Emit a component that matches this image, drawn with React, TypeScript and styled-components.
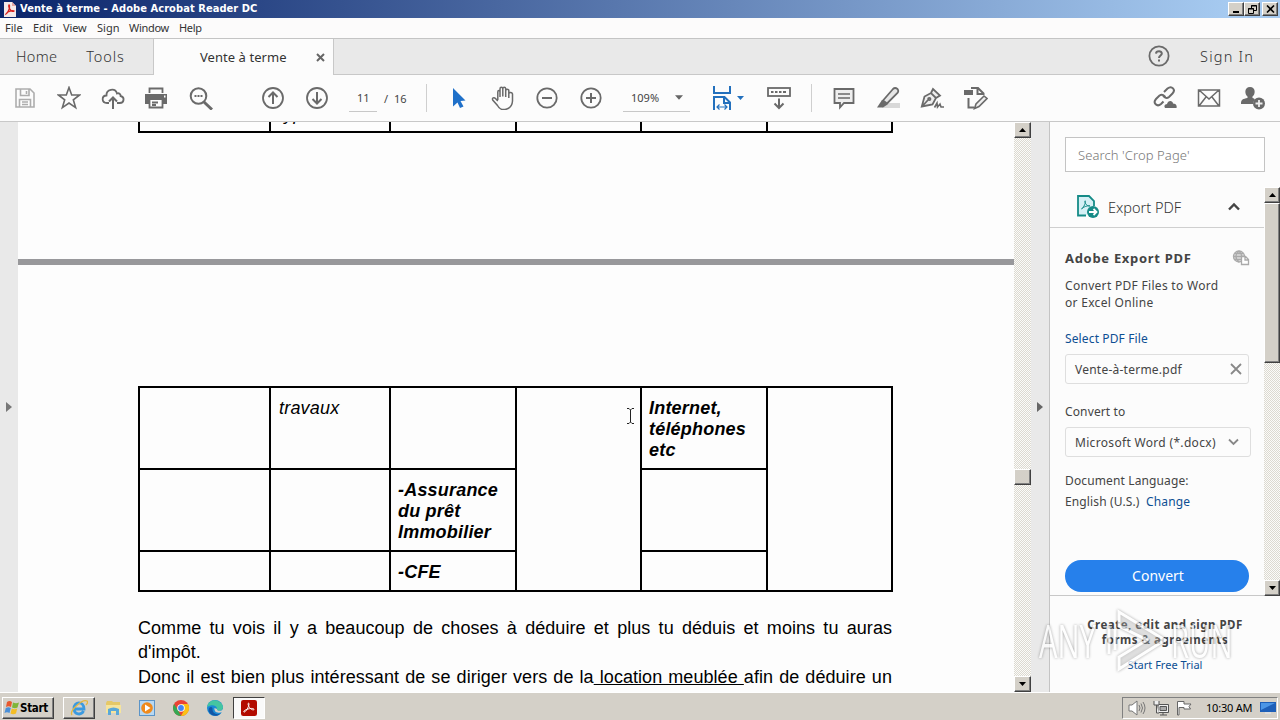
import React from 'react';
import styled, { createGlobalStyle, css } from 'styled-components';

const GlobalStyle = createGlobalStyle`
  * {
    box-sizing: border-box;
  }

  body {
    margin: 0;
    overflow: hidden;
    background: #fff;
    font-family: 'Noto Sans', 'Open Sans', sans-serif;
  }

  svg {
    display: block;
    flex: none;
  }
`;

const raised = css`
  background: #d4d0c8;
  border: 1px solid;
  border-color: #fff #404040 #404040 #fff;
  box-shadow: inset -1px -1px 0 #808080;
`;

const Screen = styled.div`
  position: relative;
  width: 1280px;
  height: 720px;
  display: flex;
  flex-direction: column;
  overflow: hidden;
  white-space: nowrap;
  color: #444;
`;

/* window frame */

const TitleBar = styled.header`
  height: 18px;
  padding: 0 2px 0 3px;
  display: flex;
  align-items: center;
  background: linear-gradient(90deg, #0a246a, #a6caf0 96%);
`;

const WindowTitle = styled.div`
  flex: 1;
  margin-left: 4px;
  color: #fff;
  font: bold 11px/18px 'DejaVu Sans Condensed', 'DejaVu Sans', sans-serif;
  font-stretch: condensed;
  letter-spacing: 0.07px;
`;

const WindowButton = styled.div<{ gap?: number }>`
  ${raised}
  width: 16px;
  height: 14px;
  margin-left: ${({ gap }) => gap || 0}px;
  display: flex;
  align-items: center;
  justify-content: center;
`;

const MenuBar = styled.nav`
  height: 20px;
  padding-left: 5px;
  display: flex;
  align-items: center;
  background: #fcfbfb;
`;

const MenuItem = styled.span<{ width: number; spacing?: number }>`
  width: ${({ width }) => width}px;
  font-size: 11px;
  line-height: 20px;
  color: #333;
  letter-spacing: ${({ spacing }) => spacing || 0}px;
`;

const TabBar = styled.div`
  height: 37px;
  display: flex;
  background: #e9e9e9;
  border-top: 1px solid #c4c4c4;
`;

const TabGroup = styled.div<{ grow?: boolean }>`
  flex: ${({ grow }) => (grow ? 1 : 'none')};
  width: ${({ grow }) => (grow ? 'auto' : '153px')};
  padding-left: ${({ grow }) => (grow ? 0 : 16)}px;
  padding-right: ${({ grow }) => (grow ? 26 : 0)}px;
  padding-bottom: 2px;
  display: flex;
  align-items: center;
  justify-content: ${({ grow }) => (grow ? 'flex-end' : 'flex-start')};
  gap: 29px;
  border-bottom: 1px solid #c8c8c8;
`;

const TabLabel = styled.span<{ spacing?: number }>`
  font-size: 14.5px;
  font-weight: 300;
  letter-spacing: ${({ spacing }) => spacing || 0}px;
  color: #333;
`;

const ActiveTab = styled.div`
  width: 181px;
  padding: 0 8px 0 46px;
  display: flex;
  align-items: center;
  justify-content: space-between;
  font-size: 13px;
  letter-spacing: 0.05px;
  color: #333;
  background: #fcfcfc;
  border-left: 1px solid #c8c8c8;
  border-right: 1px solid #c8c8c8;
`;

const Toolbar = styled.div`
  height: 47px;
  padding: 0 5px 0 3px;
  display: flex;
  align-items: center;
  background: #fcfcfc;
  border-bottom: 1px solid #c8c8c8;
`;

const Tool = styled.div<{ left?: number; width?: number }>`
  width: ${({ width }) => width || 44}px;
  margin-left: ${({ left }) => left || 0}px;
  display: flex;
  justify-content: center;
  flex: none;
`;

const Divider = styled.div<{ left: number }>`
  width: 1px;
  height: 28px;
  margin-left: ${({ left }) => left}px;
  background: #cfcfcf;
`;

const Field = styled.div<{ width: number; left: number }>`
  width: ${({ width }) => width}px;
  height: 27px;
  margin-left: ${({ left }) => left}px;
  padding: 0 7px 0 8px;
  display: flex;
  align-items: center;
  justify-content: space-between;
  font-size: 11px;
  color: #444;
  border-bottom: 1px solid #c8c8c8;
`;

const PageTotal = styled.span`
  width: 43px;
  padding-left: 7px;
  font-size: 11px;
  word-spacing: 3px;
  color: #444;
`;

const Spacer = styled.div`
  flex: 1;
`;

/* document */

const Workspace = styled.main`
  height: 570px;
  display: flex;
`;

const Gutter = styled.div`
  width: 18px;
  display: flex;
  align-items: center;
  justify-content: center;
  background: #e9e9e9;
`;

const Pages = styled.div`
  width: 996px;
  display: flex;
  flex-direction: column;
  overflow: hidden;
  background: #fdfdfd;
  color: #000;
  font-family: 'Liberation Sans', Arial, sans-serif;
  font-size: 18px;
`;

const PageBreak = styled.div`
  height: 6px;
  flex: none;
  margin: 126px 0 121px;
  background: #98989b;
`;

const Table = styled.div<{ tail?: boolean }>`
  width: 755px;
  flex: none;
  margin-left: 120px;
  padding: ${({ tail }) => (tail ? '0 2px 2px' : '2px')};
  display: grid;
  grid-template-columns: 129px 118px 124px 123px 124px 123px;
  grid-template-rows: ${({ tail }) => (tail ? '9px' : '80px 80px 38px')};
  gap: 2px;
  background: #000;
`;

const Cell = styled.div<{ rows?: number; bold?: boolean }>`
  grid-row: span ${({ rows }) => rows || 1};
  padding: 10px 0 0 ${({ bold }) => (bold ? 7 : 8)}px;
  overflow: hidden;
  background: #fdfdfd;
  font-style: italic;
  font-weight: ${({ bold }) => (bold ? 'bold' : 'normal')};
  line-height: 21px;
  letter-spacing: 0.2px;
`;

const TailCell = styled(Cell)`
  height: 9px;
  padding: 0 0 6px 8px;
  display: flex;
  align-items: flex-end;
`;

const Paragraph = styled.div`
  width: 754px;
  margin: 24px 0 0 120px;
  letter-spacing: 0.05px;
`;

const Line = styled.div<{ justified?: boolean }>`
  height: 24.4px;
  line-height: 24.4px;
  text-align-last: ${({ justified }) => (justified ? 'justify' : 'left')};
`;

/* scrollbars */

const ScrollTrack = styled.div<{ width: number }>`
  width: ${({ width }) => width}px;
  flex: none;
  display: flex;
  flex-direction: column;
  background: repeating-conic-gradient(#dcd9d0 0 25%, #fbfbf9 0 50%) 0 0 / 2px 2px;
`;

const ScrollButton = styled.div`
  ${raised}
  height: 16px;
  display: flex;
  align-items: center;
  justify-content: center;
`;

const ScrollThumb = styled.div<{ top: number; height: number }>`
  ${raised}
  height: ${({ height }) => height}px;
  margin-top: ${({ top }) => top}px;
`;

/* tools pane */

const ToolsPane = styled.aside`
  width: 231px;
  display: flex;
  flex-direction: column;
  background: #fcfcfc;
  border-left: 1px solid #c4c4c4;
`;

const SearchBox = styled.div`
  width: 200px;
  height: 35px;
  margin: 15px 0 15px 15px;
  padding-left: 12px;
  border: 1px solid #c4c4c4;
  background: #fff;
  color: #777;
  font-size: 13px;
  font-weight: 300;
  line-height: 34px;
  letter-spacing: 0.1px;
`;

const PaneScroller = styled.div`
  height: 409px;
  display: flex;
`;

const PaneBody = styled.div`
  flex: 1;
  border-bottom: 1px solid #c8c8c8;
`;

const SectionHeader = styled.div`
  height: 41px;
  padding: 0 22px 0 26px;
  display: flex;
  align-items: center;
  border-bottom: 1px solid #cfcfcf;
`;

const SectionTitle = styled.span`
  flex: 1;
  margin-left: 8px;
  font-size: 14.5px;
  font-weight: 300;
  color: #333;
`;

const Form = styled.div`
  width: 201px;
  padding: 20px 0 0 15px;
  font-size: 12px;
  letter-spacing: 0.13px;
`;

const FormTitle = styled.div`
  height: 20px;
  padding-right: 1px;
  display: flex;
  align-items: center;
  justify-content: space-between;
  font-size: 13px;
  font-weight: bold;
  letter-spacing: 0.7px;
`;

const Hint = styled.div`
  margin-top: 9px;
  line-height: 17px;
  letter-spacing: 0.3px;
`;

const TextLink = styled.span`
  color: #0d4f93;
`;

const Label = styled.div<{ top: number }>`
  height: 20px;
  margin-top: ${({ top }) => top}px;
  line-height: 20px;
`;

const Input = styled.div<{ wide?: boolean }>`
  width: ${({ wide }) => (wide ? 186 : 184)}px;
  height: 30px;
  margin-top: 5px;
  padding: 0 ${({ wide }) => (wide ? 11 : 6)}px 0 9px;
  display: flex;
  align-items: center;
  justify-content: space-between;
  letter-spacing: ${({ wide }) => (wide ? 0.32 : 0.24)}px;
  border: 1px solid #dedede;
  border-radius: 3px;
`;

const ConvertButton = styled.div`
  width: 184px;
  height: 32px;
  margin-top: 48px;
  padding-left: 2px;
  border-radius: 16px;
  background: #2680eb;
  color: #fff;
  font-size: 14px;
  line-height: 31px;
  letter-spacing: 0;
  text-align: center;
`;

const Promo = styled.div`
  width: 200px;
  margin: 21px 0 0 15px;
  font-size: 11.5px;
  font-weight: bold;
  line-height: 15px;
  text-align: center;
  letter-spacing: 0.5px;
`;

const Trial = styled.div`
  margin-top: 10px;
  color: #0d4f93;
  font-size: 11px;
  font-weight: normal;
  letter-spacing: 0;
`;

/* watermark lies over the pane */

const Watermark = styled.div`
  position: absolute;
  left: 1039px;
  top: 606px;
  width: 196px;
  height: 70px;
  display: flex;
  align-items: center;
  justify-content: space-between;
  opacity: 0.75;
  filter: drop-shadow(0 0 1.5px rgba(0, 0, 0, 0.45));
`;

const WatermarkText = styled.span<{ width: number }>`
  width: ${({ width }) => width}px;
  color: #fff;
  font: 45px/72px 'Open Sans', sans-serif;
  transform: scaleX(0.65);
  transform-origin: left;
`;

/* taskbar */

const TaskBar = styled.footer`
  height: 28px;
  padding: 3px 2px 1px;
  display: flex;
  align-items: center;
  background: #d4d0c8;
  border-top: 1px solid #fff;
`;

const StartButton = styled.div`
  ${raised}
  width: 52px;
  height: 22px;
  margin-right: 9px;
  padding-left: 1px;
  display: flex;
  align-items: center;
  color: #000;
  font: bold 11.5px 'DejaVu Sans Condensed', sans-serif;
  font-stretch: condensed;
  letter-spacing: -0.3px;
`;

const TaskButton = styled.div<{ mode?: 'raised' | 'pressed' }>`
  width: ${({ mode }) => (mode ? 32 : 34)}px;
  height: 22px;
  margin-right: ${({ mode }) => (mode ? 1 : 0)}px;
  display: flex;
  align-items: center;
  justify-content: center;
  ${({ mode }) => mode === 'raised' && raised}
  ${({ mode }) =>
    mode === 'pressed' &&
    css`
      margin-left: 1px;
      background: #fafafa;
      border: 1px solid;
      border-color: #404040 #fff #fff #404040;
    `}
`;

const Tray = styled.div`
  width: 156px;
  height: 22px;
  padding: 0 1px 0 5px;
  display: flex;
  align-items: center;
  gap: 7px;
  border: 1px solid;
  border-color: #808080 #fff #fff #808080;
`;

const Clock = styled.span`
  width: 47px;
  margin-left: 6px;
  font-size: 11px;
  letter-spacing: -0.2px;
  color: #000;
`;

const TextCursor = styled.svg`
  position: absolute;
  left: 626px;
  top: 407px;
`;

const Icon = ({ size = 24, children }: { size?: number; children: React.ReactNode }) => (
  <svg width={size} height={size} viewBox="0 0 24 24" fill="none" stroke="#6a6a6a" strokeWidth="1.8">
    {children}
  </svg>
);

const Arrow = ({ dir = 'up', color = '#000', w = 7 }: { dir?: 'up' | 'down' | 'right'; color?: string; w?: number }) => (
  <svg width={w} height={dir === 'right' ? 10 : w > 7 ? 5 : 4} viewBox={dir === 'right' ? '0 0 6 10' : '0 0 7 4'} fill={color}>
    <path d={{ up: 'M0 4L3.5 0L7 4Z', down: 'M0 0H7L3.5 4Z', right: 'M0 0L6 5L0 10Z' }[dir]} />
  </svg>
);

const AcrobatMark = ({ size }: { size: number }) => (
  <svg width={size} height={size} viewBox="0 0 18 18" fill="none">
    <rect width="18" height="18" rx="2.5" fill="#b30b00" />
    <path
      d="M3.5 13.6c2-.1 5.3-5.8 5.5-9.1.1-1.5-1.3-1.2-1 .3.5 3.2 3.6 6.5 6 6.3 1.6-.2.4-1.7-2.1-1.6-3.3.1-7.1 1.4-8.3 2.7-.6.8-.6 1.4-.1 1.4Z"
      stroke="#fff"
      strokeWidth="1.1"
    />
  </svg>
);

const App = () => (
  <Screen>
    <GlobalStyle />
    <TitleBar>
      <svg width="13" height="15" viewBox="0 0 13 15">
        <path d="M1 0H9L13 4V15H1Z" fill="#f4e9e9" />
        <path d="M9 0V4H13" fill="#e4a5a2" />
        <path d="M3 12C5 11 7 6 6.5 3.5C6 2 5 4 6.5 6.5C8 9 10 10 11 9C10 8 4 9.5 3 12Z" fill="none" stroke="#d8211d" strokeWidth="1.3" />
      </svg>
      <WindowTitle>Vente à terme - Adobe Acrobat Reader DC</WindowTitle>
      <WindowButton>
        <svg width="8" height="8"><path d="M1 6H7V8H1Z" /></svg>
      </WindowButton>
      <WindowButton>
        <svg width="9" height="9" fill="none" stroke="#000">
          <path d="M3.5 3V.5H8.5V5.5H6M3 1H9M.5 3.5H5.5V8.5H.5ZM0 4H6" />
        </svg>
      </WindowButton>
      <WindowButton gap={2}>
        <svg width="9" height="8" stroke="#000" strokeWidth="1.6"><path d="M1 .5L8 7.5M8 .5L1 7.5" /></svg>
      </WindowButton>
    </TitleBar>
    <MenuBar>
      <MenuItem width={28}>File</MenuItem>
      <MenuItem width={30}>Edit</MenuItem>
      <MenuItem width={34} spacing={-0.1}>View</MenuItem>
      <MenuItem width={32}>Sign</MenuItem>
      <MenuItem width={50} spacing={-0.3}>Window</MenuItem>
      <MenuItem width={30} spacing={-0.3}>Help</MenuItem>
    </MenuBar>
    <TabBar>
      <TabGroup>
        <TabLabel spacing={0.3}>Home</TabLabel>
        <TabLabel spacing={0.9}>Tools</TabLabel>
      </TabGroup>
      <ActiveTab>
        <span>Vente à terme</span>
        <svg width="9" height="9" stroke="#666" strokeWidth="2"><path d="M1 1L8 8M8 1L1 8" /></svg>
      </ActiveTab>
      <TabGroup grow>
        <Icon>
          <circle cx="12" cy="12" r="9.6" />
          <path d="M9 9.6C9.2 6.5 15 6.5 14.8 9.6C14.7 11.4 12 11.6 12 14M12 15.6V17.6" strokeWidth="2" />
        </Icon>
        <TabLabel spacing={1.2}>Sign In</TabLabel>
      </TabGroup>
    </TabBar>
    <Toolbar>
      <Tool>
        <svg width="20" height="20" viewBox="0 0 20 20" fill="none" stroke="#adadad" strokeWidth="1.6">
          <path d="M1 1H15L19 5V19H1ZM5.5 1V7.5H14V1M4.5 19V11.5H15.5V19M7 14H13M7 16.5H13M11.5 3V6" />
        </svg>
      </Tool>
      <Tool>
        <Icon>
          <path d="M12 1.5L14.7 9H22.6L16.3 13.8L18.6 21.6L12 17L5.4 21.6L7.7 13.8L1.4 9H9.3Z" strokeWidth="1.6" />
        </Icon>
      </Tool>
      <Tool>
        <Icon>
          <path d="M8 17H6C.3 17 .3 9.7 5.5 9.5C5 3 14.2 1.5 16 7.5C18 6.7 19.7 8 19.6 10C24 11 23.3 17 18.8 17H16" />
          <path d="M12 23V12M8 15.5L12 11.5L16 15.5" strokeWidth="2" />
        </Icon>
      </Tool>
      <Tool left={-1}>
        <Icon>
          <path d="M1 8H23V18H19V14H5V18H1Z" fill="#6a6a6a" stroke="none" />
          <path d="M5.5 7V2.5H18.5V7M5.5 14V21.5H18.5V14M8 16.5H14M8 19H12" />
          <path d="M20 10.5H21.5" stroke="#fff" />
        </Icon>
      </Tool>
      <Tool left={1}>
        <Icon>
          <circle cx="9.5" cy="10" r="7.8" strokeWidth="2" />
          <path d="M15 16L23 23.5" strokeWidth="3" />
          <path d="M5.5 10H7.5M8.5 10H10.5M11.5 10H13.5" />
        </Icon>
      </Tool>
      <Tool left={28}>
        <Icon>
          <circle cx="12" cy="12" r="10" />
          <path d="M12 18V6.5M7.5 11L12 6.5L16.5 11" strokeWidth="2" />
        </Icon>
      </Tool>
      <Tool>
        <Icon>
          <circle cx="12" cy="12" r="10" />
          <path d="M12 6V17.5M7.5 13L12 17.5L16.5 13" strokeWidth="2" />
        </Icon>
      </Tool>
      <Field width={28} left={10}>11</Field>
      <PageTotal>/ 16</PageTotal>
      <Divider left={6} />
      <Tool left={10}>
        <svg width="14" height="20" viewBox="0 0 14 20" fill="#1f70c9"><path d="M1 0L13.5 12.5L8.5 13L11.5 18.5L8 20L5.5 14.5L1 18.5Z" /></svg>
      </Tool>
      <Tool>
        <Icon>
          <path d="M6.8 14V6C6.8 4 9 4 9 6V11M9 10.5V3C9 .8 11.8.8 11.8 3V10.5M11.8 10V2.7C12 .8 14.5.8 14.7 2.7V11M14.7 10.5V4.5C15 2.8 17.5 2.8 17.8 4.5V12M17.8 9V7.5C18.5 6 21 6.2 21.5 8V15C21 24 10 26.5 6.5 19.5L1.7 14C.7 12 3 11 4.5 12.5L6.8 15" strokeWidth="1.5" />
        </Icon>
      </Tool>
      <Tool>
        <Icon><circle cx="12" cy="12" r="9.7" /><path d="M7 12H17" strokeWidth="2" /></Icon>
      </Tool>
      <Tool>
        <Icon><circle cx="12" cy="12" r="9.7" /><path d="M7 12H17M12 7V17" strokeWidth="2" /></Icon>
      </Tool>
      <Field width={67} left={10}>
        109% <Arrow dir="down" color="#666" w={8} />
      </Field>
      <Tool left={20} width={24}>
        <svg width="18" height="26" viewBox="0 0 18 26" fill="none" stroke="#2370bd" strokeWidth="2">
          <path d="M1 1V8H17V1M1 25V12H11.5L17 17.5V25M11 12V18H17" />
          <path d="M4 22H14M6.5 19.5L4 22L6.5 24.5M11.5 19.5L14 22L11.5 24.5" strokeWidth="1.2" />
        </svg>
      </Tool>
      <Tool left={1} width={10}><Arrow dir="down" color="#2370bd" /></Tool>
      <Tool left={12}>
        <Icon>
          <rect x="1" y="2" width="22" height="8" />
          <path d="M4 6H6.5M8 6H10.5M12 6H14.5M16 6H19" />
          <path d="M12 12.5V22M7.5 17.5L12 22L16.5 17.5" strokeWidth="2" />
        </Icon>
      </Tool>
      <Divider left={10} />
      <Tool left={10}>
        <Icon>
          <path d="M2.5 3H21.5V17H12L8 21.5V17H2.5Z" fill="#eee" />
          <path d="M6 8H18M6 12H18" strokeWidth="1.4" />
        </Icon>
      </Tool>
      <Tool>
        <Icon>
          <path d="M10 17H24V22H6Z" fill="#d8d8d8" stroke="none" />
          <path d="M7 14.5L17 3Q19 1 21.5 3Q23 5 21.5 7L11 17.5Z" fill="#e6e6e6" />
          <path d="M6 14L11.5 18.5L7 21.5H1Z" fill="#6a6a6a" stroke="none" />
        </Icon>
      </Tool>
      <Tool>
        <Icon>
          <path d="M1.8 20.5L4.5 10.5L11 7L16 12L12.5 18.5ZM2 20.5L8 14M11 7L13 3L20 9.5L16 12" fill="#eee" />
          <path d="M13 1.5L21 9" stroke="#fcfcfc" strokeWidth="0" />
          <circle cx="9.3" cy="13" r="1.2" />
          <path d="M14.5 21.5L17 17L17.5 21L20 18L21 21H24" strokeWidth="1.6" />
        </Icon>
      </Tool>
      <Tool>
        <Icon>
          <path d="M0 4H9V9H0Z" fill="#6a6a6a" stroke="none" />
          <path d="M7 2H14L19.5 7.5V9M13.5 2V8H19M4.5 12V21.5H10" strokeWidth="2" />
          <path d="M10.5 22.5L12 18L20 10L23 12.5L15 20.5Z" fill="#eee" strokeWidth="1.6" />
        </Icon>
      </Tool>
      <Spacer />
      <Tool>
        <Icon>
          <path d="M11 6L14.5 2.5C19-1 23 4 19.5 7.5L16 11C13.5 13 10.5 11.5 10 9M10.5 15.5L8 18C4 21.5-.5 17 3 13L6.5 9.5C9 8 12 9 12.5 12" strokeWidth="2" />
          <path d="M12 22C10 18.5 14 18 14 18C15 13.5 20 14.5 20 17.5C24 17.5 24 21 23.5 22Z" fill="#6a6a6a" stroke="none" />
        </Icon>
      </Tool>
      <Tool>
        <Icon>
          <path d="M1.5 4H22.5V20H1.5ZM2 4L12 13L22 4M2 20L9 11M22 20L15 11" strokeWidth="1.5" />
        </Icon>
      </Tool>
      <Tool>
        <Icon>
          <path d="M9 1C15 1 14.5 8.5 11.5 10.5V12C14 12.5 14 13 12.5 16Q12 18 12 18H0C0 13 2 13 6.5 12V10.5C3.5 8.5 3 1 9 1Z" fill="#6a6a6a" stroke="none" />
          <circle cx="18" cy="17.5" r="6" fill="#6a6a6a" stroke="none" />
          <path d="M14.5 17.5H21.5M18 14V21" stroke="#eee" />
        </Icon>
      </Tool>
    </Toolbar>

    <Workspace>
      <Gutter><Arrow dir="right" color="#777" w={6} /></Gutter>
      <Pages>
        <Table tail>
          <TailCell />
          <TailCell>type</TailCell>
          <TailCell /><TailCell /><TailCell /><TailCell />
        </Table>
        <PageBreak />
        <Table>
          <Cell />
          <Cell>travaux</Cell>
          <Cell />
          <Cell rows={3} />
          <Cell bold>Internet,<br />téléphones<br />etc</Cell>
          <Cell rows={3} />
          <Cell />
          <Cell />
          <Cell bold>-Assurance<br />du prêt<br />Immobilier</Cell>
          <Cell />
          <Cell />
          <Cell />
          <Cell bold>-CFE</Cell>
          <Cell />
        </Table>
        <Paragraph>
          <Line justified>Comme tu vois il y a beaucoup de choses à déduire et plus tu déduis et moins tu auras</Line>
          <Line>d'impôt.</Line>
          <Line justified>
            Donc il est bien plus intéressant de se diriger vers de la<u> location meublée </u>afin de déduire un
          </Line>
        </Paragraph>
      </Pages>
      <ScrollTrack width={17}>
        <ScrollButton><Arrow /></ScrollButton>
        <ScrollThumb top={331} height={16} />
        <Spacer />
        <ScrollButton><Arrow dir="down" /></ScrollButton>
      </ScrollTrack>
      <Gutter><Arrow dir="right" color="#666" w={6} /></Gutter>
      <ToolsPane>
        <SearchBox>Search 'Crop Page'</SearchBox>
        <PaneScroller>
          <PaneBody>
            <SectionHeader>
              <svg width="24" height="24" viewBox="0 0 24 24" fill="none" stroke="#158b87" strokeWidth="1.8">
                <path d="M10 20.5H2V1H13L18 6V11" fill="#d5f0f5" />
                <path d="M5.5 14C8 12.5 10 7 9.2 5.8C8 6 10 11.5 14 11C12.5 10 7 12 5.5 14Z" strokeWidth="1" />
                <circle cx="17" cy="17" r="6" fill="#158b87" stroke="none" />
                <path d="M13 17H20M17.5 14L20.5 17L17.5 20" stroke="#fff" />
              </svg>
              <SectionTitle>Export PDF</SectionTitle>
              <svg width="16" height="10" fill="none" stroke="#444" strokeWidth="2.4"><path d="M3 7.5L8 2.5L13 7.5" /></svg>
            </SectionHeader>
            <Form>
              <FormTitle>
                Adobe Export PDF
                <svg width="18" height="16" viewBox="0 0 18 16" fill="none" stroke="#aaa" strokeWidth="1.3">
                  <circle cx="7" cy="6.5" r="5.5" fill="#ddd" />
                  <path d="M1.5 6.5H12M3 3.5H11M3 9.5H9M7 1C3 4 3 9 7 12M7 1C9 3 10 5 9.5 7" />
                  <path d="M9.5 6.5H13.5L16.5 9.5V14.5H9.5ZM13 7V10H16" fill="#fff" />
                </svg>
              </FormTitle>
              <Hint>Convert PDF Files to Word<br />or Excel Online</Hint>
              <Label top={18}><TextLink>Select PDF File</TextLink></Label>
              <Input>
                Vente-à-terme.pdf
                <svg width="12" height="12" stroke="#888" strokeWidth="1.8"><path d="M1 1L11 11M11 1L1 11" /></svg>
              </Input>
              <Label top={18}>Convert to</Label>
              <Input wide>
                Microsoft Word (*.docx)
                <svg width="11" height="8" fill="none" stroke="#888" strokeWidth="1.8"><path d="M1 1.5L5.5 6L10 1.5" /></svg>
              </Input>
              <Label top={14}>Document Language:</Label>
              <Label top={1}>English (U.S.) &nbsp;<TextLink>Change</TextLink></Label>
              <ConvertButton>Convert</ConvertButton>
            </Form>
          </PaneBody>
          <ScrollTrack width={16}>
            <ScrollButton><Arrow /></ScrollButton>
            <ScrollThumb top={0} height={160} />
            <Spacer />
            <ScrollButton><Arrow dir="down" /></ScrollButton>
          </ScrollTrack>
        </PaneScroller>
        <Promo>
          Create, edit and sign PDF<br />forms &amp; agreements
          <Trial>Start Free Trial</Trial>
        </Promo>
      </ToolsPane>
    </Workspace>

    <TaskBar>
      <StartButton>
        <svg width="16" height="16" viewBox="0 0 16 16">
          <path d="M3 2Q5.5 0 8 2L7 7Q4.5 5.5 2 7Z" fill="#e8582e" />
          <path d="M9 2.5Q12 4 15 2.5L13.5 7.5Q11 9 8 7.5Z" fill="#7fb539" />
          <path d="M1.8 8Q4.5 6.5 6.8 8L5.5 13Q3 11.5.5 13Z" fill="#4a8fd8" />
          <path d="M7.8 8.5Q10.5 10 13.2 8.5L12 13.5Q9 15 6.5 13.5Z" fill="#f4bd25" />
        </svg>
        Start
      </StartButton>
      <TaskButton mode="raised">
        <svg width="18" height="18" viewBox="0 0 18 18" fill="none">
          <path d="M4 10H14C14 2 4 2 4 9.5C4 16 11.5 16.5 13.5 12" stroke="#3b9ae0" strokeWidth="2.8" />
          <path d="M2 16C-1 12 12 0 17 2C18 3 17 5 16 6" stroke="#e4b73f" strokeWidth="1.3" />
        </svg>
      </TaskButton>
      <TaskButton>
        <svg width="17" height="16" viewBox="0 0 17 16">
          <path d="M1 3L2 1H7L8 2H15V6H1Z" fill="#e5c867" />
          <path d="M1 5H16V13H1Z" fill="#f6e49c" />
          <path d="M3 9Q8.5 6 14 9V15H11V11H6V15H3Z" fill="#5aa8d8" />
        </svg>
      </TaskButton>
      <TaskButton>
        <svg width="16" height="16" viewBox="0 0 16 16">
          <rect x=".5" y=".5" width="15" height="15" fill="#b8d8f2" stroke="#5b94c8" />
          <circle cx="8" cy="8" r="5.8" fill="#f08a1c" />
          <path d="M6 4.5L11.5 8L6 11.5Z" fill="#fff" />
        </svg>
      </TaskButton>
      <TaskButton>
        <svg width="16" height="16" viewBox="0 0 16 16">
          <circle cx="8" cy="8" r="8" fill="#ea4335" />
          <path d="M1.1 4L4.9 10L8 16A8 8 0 0 1 1.1 4Z" fill="#34a853" />
          <path d="M15 4A8 8 0 0 1 8 16L11.2 10L8 4Z" fill="#fbc116" />
          <circle cx="8" cy="8" r="3.8" fill="#fff" />
          <circle cx="8" cy="8" r="2.9" fill="#4285f4" />
        </svg>
      </TaskButton>
      <TaskButton>
        <svg width="16" height="16" viewBox="0 0 16 16">
          <circle cx="8" cy="8" r="8" fill="#1a8ad6" />
          <path d="M.2 7C1 1 7-1 11.5 1.2C15 3 16.5 6 15.8 8.5C14.8 11.5 9 11 9.8 9C10.8 6 5 3.5.2 7Z" fill="#45c5a1" />
          <path d="M5.5 8C5 13 9 15.5 13.5 13.6C10 17.5 4 16 2 12C.5 8 4 5.5 5.5 8Z" fill="#1256a5" />
          <path d="M10 9C9.2 11 14.5 11.8 16 9V12L13.5 12.5C9 13.5 7 11 7.5 8Z" fill="#d4d0c8" />
        </svg>
      </TaskButton>
      <TaskButton mode="pressed"><AcrobatMark size={16} /></TaskButton>
      <Spacer />
      <Tray>
        <svg width="18" height="16" viewBox="0 0 18 16" fill="#fff" stroke="#777">
          <path d="M1 5H4L9 1V15L4 11H1Z" />
          <path d="M11 5Q13 8 11 11M13 3.5Q16 8 13 12.5M15 2Q19 8 15 14" fill="none" />
        </svg>
        <svg width="16" height="16" viewBox="0 0 16 16" fill="#eee" stroke="#555">
          <path d="M5 4.5H15.5V12.5H5ZM7 15H14M10 12V15" />
          <path d="M7 6.5H13.5V10.5H7Z" fill="#aaa" />
          <path d="M1 1V5H6V1M3.5 5V13H6" />
        </svg>
        <svg width="17" height="16" viewBox="0 0 17 16" fill="#fff" stroke="#666">
          <path d="M1.5 15V1.5H8V4H15L13 6.5L14.5 9H8V7.5H3V15Z" />
        </svg>
        <Clock>10:30 AM</Clock>
        <svg width="16" height="14" viewBox="0 0 16 14">
          <path d="M0 1H16V11H0Z" fill="#1e5fb8" />
          <path d="M1 2H15L1 9Z" fill="#4c96e6" />
          <path d="M5 11H11V13H5Z" fill="#ddd" />
        </svg>
      </Tray>
    </TaskBar>

    <Watermark>
      <WatermarkText width={62}>ANY</WatermarkText>
      <svg width="62" height="66" viewBox="0 0 62 66" fill="#ddd" fillOpacity=".4" stroke="#fff" strokeWidth="3">
        <path d="M14 4L60 32L14 61V49L42 32L14 18Z" />
        <path d="M4 18V46M10 21V42" />
      </svg>
      <WatermarkText width={64}>RUN</WatermarkText>
    </Watermark>
    <TextCursor width="9" height="18" fill="none" stroke="#222">
      <path d="M1 1.5H3L4.5 3L6 1.5H8M4.5 3V15M1 16.5H3L4.5 15L6 16.5H8" />
    </TextCursor>
  </Screen>
);

export default App;
